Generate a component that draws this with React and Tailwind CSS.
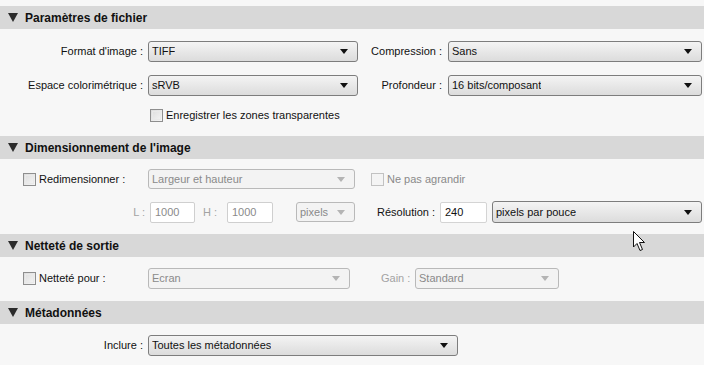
import React from 'react';

const font = { fontFamily: '"Liberation Sans", Arial, sans-serif' };

function Arrow({ disabled }) {
  return (
    <svg width="8" height="5" viewBox="0 0 8 5" className="shrink-0">
      <path d="M0 0 H8 L4 5 Z" fill={disabled ? '#b4b4b4' : '#111'} />
    </svg>
  );
}

function Select({ value, w, disabled, h = 'h-[21px]' }) {
  return (
    <div
      className={`${w} ${h} shrink-0 flex items-center justify-between pl-[3px] pr-[9px] rounded-[3px] border ${
        disabled
          ? 'border-[#b9b9b9] bg-[#f3f3f3] text-[#8a8a8a]'
          : 'border-[#7d7d7d] bg-gradient-to-b from-[#f4f4f4] to-[#dcdcdc] text-[#111]'
      }`}
    >
      <span className="truncate">{value}</span>
      <Arrow disabled={disabled} />
    </div>
  );
}

function Input({ value, w, disabled }) {
  return (
    <div
      className={`${w} h-[21px] shrink-0 flex items-center pl-[4px] rounded-[2px] border bg-white ${
        disabled ? 'border-[#cfcfcf] text-[#8a8a8a]' : 'border-[#d4d4d4] text-[#111]'
      }`}
    >
      {value}
    </div>
  );
}

function Checkbox({ disabled }) {
  return (
    <div
      className={`w-[13px] h-[13px] shrink-0 border ${
        disabled ? 'border-[#c2c2c2] bg-[#f4f4f4]' : 'border-[#8e8e8e] bg-gradient-to-br from-[#dcdcdc] to-[#f6f6f6]'
      } p-[1px]`}
    >
      <div className={`w-full h-full ${disabled ? '' : 'border border-[#e9e9e9]'}`} />
    </div>
  );
}

function Header({ title }) {
  return (
    <div className="h-[23px] bg-[#d8d8d8] flex items-center pl-[8px]">
      <svg width="10" height="9" viewBox="0 0 10 9" className="mr-[7px]">
        <path d="M0 0 H10 L5 9 Z" fill="#2b2b2b" />
      </svg>
      <span className="font-bold text-[12px] text-[#111]">{title}</span>
    </div>
  );
}

export default function App() {
  return (
    <div className="relative w-[704px] h-[365px] overflow-hidden bg-[#f7f7f7] text-[11px] text-[#111] whitespace-nowrap" style={font}>
      <div className="h-[6px]" />

      {/* Paramètres de fichier */}
      <Header title="Paramètres de fichier" />
      <div className="pt-[12px] pb-[14px] flex flex-col">
        <div className="flex items-center h-[21px]">
          <span className="w-[143px] text-right">Format d'image :</span>
          <div className="ml-[5px]"><Select value="TIFF" w="w-[210px]" /></div>
          <span className="w-[84px] text-right">Compression :</span>
          <div className="ml-[6px]"><Select value="Sans" w="w-[254px]" /></div>
        </div>
        <div className="flex items-center h-[21px] mt-[13px]">
          <span className="w-[143px] text-right">Espace colorimétrique :</span>
          <div className="ml-[5px]"><Select value="sRVB" w="w-[210px]" /></div>
          <span className="w-[84px] text-right">Profondeur :</span>
          <div className="ml-[6px]"><Select value="16 bits/composant" w="w-[254px]" /></div>
        </div>
        <div className="flex items-center h-[14px] mt-[12px] pl-[150px]">
          <Checkbox />
          <span className="ml-[3px]">Enregistrer les zones transparentes</span>
        </div>
      </div>

      {/* Dimensionnement de l'image */}
      <Header title="Dimensionnement de l'image" />
      <div className="pt-[10px] pb-[11px] flex flex-col">
        <div className="flex items-center h-[20px]">
          <div className="pl-[23px] w-[148px] flex items-center">
            <Checkbox />
            <span className="ml-[3px]">Redimensionner :</span>
          </div>
          <Select value="Largeur et hauteur" w="w-[207px]" h="h-[20px]" disabled />
          <div className="ml-[16px] flex items-center text-[#8a8a8a]">
            <Checkbox disabled />
            <span className="ml-[3px]">Ne pas agrandir</span>
          </div>
        </div>
        <div className="flex items-center h-[22px] mt-[12px]">
          <span className="w-[145px] text-right text-[#a3a3a3]">L :</span>
          <div className="ml-[5px]"><Input value="1000" w="w-[45px]" disabled /></div>
          <span className="ml-[8px] w-[24px] text-[#a3a3a3]">H :</span>
          <Input value="1000" w="w-[46px]" disabled />
          <div className="ml-[23px]"><Select value="pixels" w="w-[59px]" h="h-[20px]" disabled /></div>
          <span className="ml-[22px] w-[63px]">Résolution :</span>
          <Input value="240" w="w-[47px]" />
          <div className="ml-[5px]"><Select value="pixels par pouce" w="w-[210px]" h="h-[22px]" /></div>
        </div>
      </div>

      {/* Netteté de sortie */}
      <Header title="Netteté de sortie" />
      <div className="pt-[11px] pb-[12px] flex flex-col">
        <div className="flex items-center h-[21px]">
          <div className="pl-[23px] w-[148px] flex items-center">
            <Checkbox />
            <span className="ml-[3px]">Netteté pour :</span>
          </div>
          <Select value="Ecran" w="w-[202px]" disabled />
          <span className="ml-[31px] w-[34px] text-[#a3a3a3]">Gain :</span>
          <Select value="Standard" w="w-[144px]" disabled />
        </div>
      </div>

      {/* Métadonnées */}
      <Header title="Métadonnées" />
      <div className="pt-[11px] flex flex-col">
        <div className="flex items-center h-[21px]">
          <span className="w-[143px] text-right">Inclure :</span>
          <div className="ml-[5px]"><Select value="Toutes les métadonnées" w="w-[310px]" /></div>
        </div>
      </div>

      {/* mouse cursor */}
      <svg className="absolute left-[633px] top-[231px]" width="14" height="21" viewBox="0 0 14 21">
        <path d="M0.5 0.5 V16 L4 12.5 L7 19.5 L9.5 18.5 L6.5 11.5 H11.5 Z" fill="#fff" stroke="#111" strokeWidth="1" strokeLinejoin="miter" />
      </svg>
    </div>
  );
}
